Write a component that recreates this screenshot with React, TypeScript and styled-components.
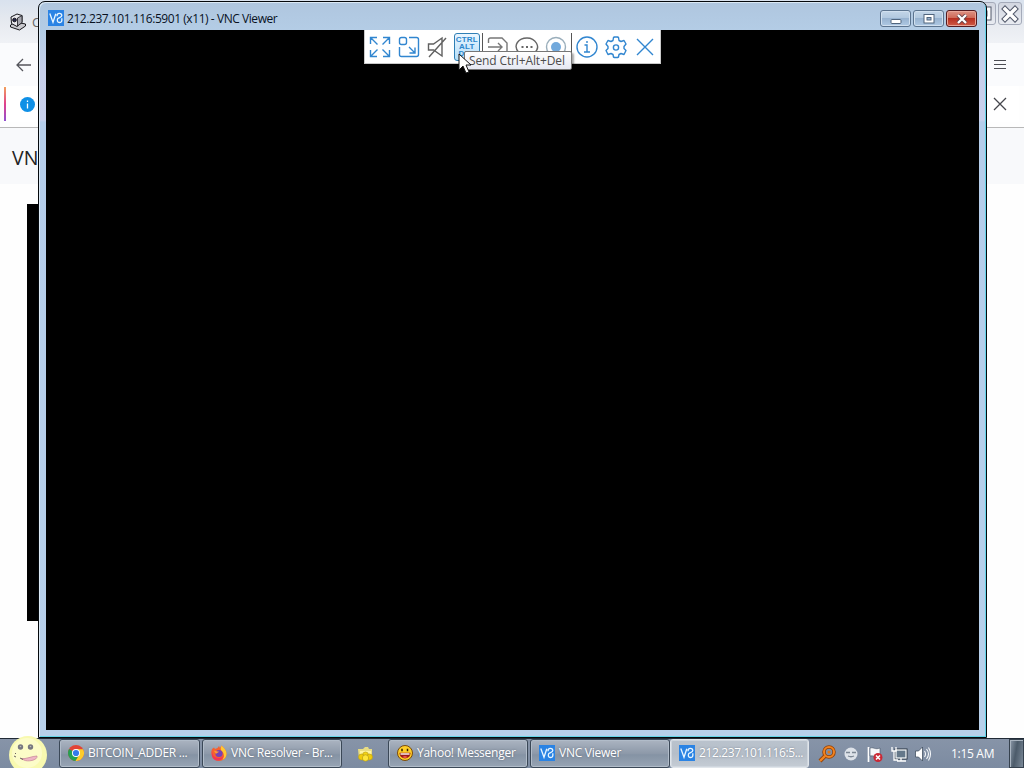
import React from 'react';
import styled, { createGlobalStyle } from 'styled-components';

const Global = createGlobalStyle`
  * { box-sizing: border-box; }
  body { margin: 0; overflow: hidden; background: #fff; font-family: "Open Sans", "Noto Sans", sans-serif; }
  svg { display: block; flex: none; }
`;

const Desktop = styled.div`
  position: relative;
  width: 1024px;
  height: 768px;
  overflow: hidden;
  display: flex;
  flex-direction: column;
`;

/* Browser in the background */
const Browser = styled.div`
  flex: 1;
  display: flex;
  flex-direction: column;
  background: #fefefe;
`;
const BrowserTabs = styled.div`
  height: 43px;
  display: flex;
  align-items: flex-start;
  justify-content: space-between;
  background: linear-gradient(#d9e2ee, #e5e9ef 45%, #f0f2f6);
`;
const TabLabel = styled.div`
  display: flex;
  align-items: center;
  gap: 5px;
  padding: 13px 0 0 9px;
  font-size: 13px;
  line-height: 18px;
  color: #666;
`;
const Captions = styled.div`
  display: flex;
  gap: 2px;
  padding: 2px 2px 0 0;
`;
const CaptionButton = styled.div`
  width: 24px;
  height: 23px;
  display: grid;
  place-items: center;
  border: 1px solid #a5abba;
  border-radius: 3px;
  background: linear-gradient(#d2d6e0, #e8ebf1);
`;
const BrowserBar = styled.div<{ $h: number; $left: number; $right: number }>`
  height: ${p => p.$h}px;
  display: flex;
  align-items: center;
  justify-content: space-between;
  padding: 0 ${p => p.$right}px 0 ${p => p.$left}px;
  background: #fafbfd;
`;
const Notice = styled.div`
  height: 36px;
  margin: 0 5px 0 4px;
  padding: 0 12px 0 15px;
  display: flex;
  align-items: center;
  justify-content: space-between;
  background: linear-gradient(#f2a05c, #e0408c 50%, #9050d0) left / 2px 34px no-repeat #fff;
`;
const Heading = styled.div`
  height: 57px;
  margin-top: 5px;
  border-top: 1px solid #b8b8b8;
  padding: 17px 0 0 12px;
  background: #f8f9fb;
  font-size: 19.5px;
  line-height: 26px;
  color: #222;
`;
const Preview = styled.div`
  width: 300px;
  height: 417px;
  margin: 20px 0 0 27px;
  background: #000;
`;

/* Viewer window */
const Window = styled.section`
  position: absolute;
  left: 38px;
  top: 1px;
  width: 949px;
  height: 737px;
  border: 1px solid #05090d;
  border-radius: 7px 7px 0 0;
  padding: 0 7px 7px 7px;
  display: flex;
  flex-direction: column;
  background: linear-gradient(#afc6df 0, #b4cde6 30px, #c7cfea 70px, #c8d0ec 118px, #b5cdea 120px, #b7d0ea 100%);
  box-shadow: inset 1px 1px 0 #dbe9f5, inset -1px -1px 0 #63d4e8;
`;
const TitleBar = styled.header`
  height: 28px;
  display: flex;
  align-items: flex-start;
  padding: 8px 2px 0 2px;
  gap: 3px;
`;
const Title = styled.div`
  flex: 1;
  font-size: 12px;
  line-height: 17px;
  letter-spacing: -0.44px;
  color: #08111f;
  white-space: nowrap;
`;
const WindowButtons = styled.div`
  display: flex;
  gap: 2px;
`;
const WindowButton = styled.div<{ $close?: boolean }>`
  width: 31px;
  height: 17px;
  display: grid;
  place-items: center;
  border: 1px solid ${p => (p.$close ? '#541b20' : '#5c748f')};
  border-radius: 3px;
  box-shadow: inset 0 0 0 1px ${p => (p.$close ? '#e9a597' : '#d1e0ef')};
  background: ${p => (p.$close
    ? 'linear-gradient(#dd9284, #cf6856 47%, #b72f20 50%, #cf5b47)'
    : 'linear-gradient(#c4d6e8, #b1c8df 47%, #98b3d0 50%, #afc9e4)')};
`;
const Screen = styled.main`
  flex: 1;
  background: #000;
  display: flex;
  justify-content: center;
  align-items: flex-start;
`;

/* Floating viewer toolbar */
const ToolBar = styled.div`
  position: relative;
  width: 297px;
  height: 34px;
  padding: 3px 1px 2px;
  display: flex;
  background: #fff;
  border: 1px solid #c9c9c9;
  border-top: 0;
`;
const ToolGroup = styled.div<{ $w: number; $divided?: boolean }>`
  width: ${p => p.$w}px;
  display: flex;
  justify-content: space-around;
  align-items: center;
  border-left: ${p => (p.$divided ? '1px solid #555' : '0')};
`;
const CadButton = styled.div`
  width: 26px;
  height: 28px;
  border: 1px solid #2f7fb5;
  border-radius: 3px;
  padding-top: 2px;
  background: linear-gradient(#eaf6ff, #b5def8);
  color: #2b86cc;
  font: 700 8px/7px "Liberation Sans", sans-serif;
  letter-spacing: 0.2px;
  text-align: center;
`;
const Tooltip = styled.div`
  position: absolute;
  left: 99px;
  top: 21px;
  width: 108px;
  height: 19px;
  border: 1px solid #767676;
  border-radius: 2px;
  padding-left: 4px;
  background: linear-gradient(#fff, #e6e8f2);
  box-shadow: 2px 2px 2px rgba(0, 0, 0, 0.35);
  color: #4c4c4c;
  font-size: 12px;
  line-height: 17px;
  letter-spacing: -0.13px;
  white-space: nowrap;
`;
const Pointer = styled.svg`
  position: absolute;
  left: 93px;
  top: 23px;
`;

/* Taskbar */
const TaskBar = styled.footer`
  height: 30px;
  display: flex;
  background: linear-gradient(#8794a8, #7c8ba1);
  border-top: 1px solid #202a36;
`;
const Start = styled.div`
  position: relative;
  z-index: 2;
  width: 59px;
  padding-left: 8px;
  margin-top: -3px;
`;
const Tasks = styled.div`
  display: flex;
  width: 751px;
`;
const Task = styled.div<{ $w: number; $gap?: number; $active?: boolean; $spacing?: number }>`
  width: ${p => p.$w}px;
  height: 29px;
  margin-right: ${p => p.$gap ?? 0}px;
  padding: 0 0 2px 8px;
  display: flex;
  align-items: center;
  gap: 4px;
  border: 1px solid ${p => (p.$active ? '#e0e5ea' : '#3b4857')};
  border-radius: 3px;
  box-shadow: inset 0 0 0 1px ${p => (p.$active ? '#cfd6de' : '#b1bcc9')};
  background: ${p => (p.$active
    ? 'linear-gradient(#bac3cd, #b5bec9 50%, #c5ccd4)'
    : 'linear-gradient(#abb4c1, #8d99a9 50%, #8593a4 55%, #97a4b4)')};
  color: #fff;
  font-size: 12px;
  letter-spacing: ${p => p.$spacing ?? -0.26}px;
  white-space: nowrap;
  text-shadow: 0 0 2px rgba(50, 60, 75, 0.5);
`;
const QuickItem = styled.div`
  width: 46px;
  display: grid;
  place-items: center;
`;
const Tray = styled.div`
  display: flex;
  align-items: center;
  gap: 6px;
  padding-left: 8px;
  width: 132px;
`;
const Clock = styled.div`
  width: 67px;
  padding: 6px 0 0 9px;
  font-size: 12px;
  line-height: 18px;
  letter-spacing: -0.3px;
  color: #fff;
  white-space: nowrap;
`;
const ShowDesktop = styled.div`
  width: 15px;
  border: 1px solid #35414e;
  box-shadow: inset 1px 1px 0 #a9b4c0;
  background: linear-gradient(100deg, #8d9aaa, #4c5b6a 45%, #7b8998);
`;

const VncLogo = () => (
  <svg width="16" height="16" viewBox="0 0 16 16" fill="none">
    <rect width="16" height="16" fill="#2a83e4" />
    <path d="M1.800 3.500 5 12.300 7.800 3.800M9 6.200C8.800 2.600 13.800 2.600 13.800 5.500 13.800 7.600 10.500 7.400 9.700 8.700 8.900 10.200 9.300 12.500 11.500 12.500 14 12.500 14 10.500 13.800 8.200" stroke="#e9f6ff" strokeWidth="1.300" />
  </svg>
);

const Stroke = ({ size = 24, color = '#3186d0', children }: { size?: number; color?: string; children: React.ReactNode }) => (
  <svg width={size} height={size} viewBox="0 0 24 24" fill="none" stroke={color} strokeWidth="1.4">{children}</svg>
);

const Cross = ({ size, color }: { size: number; color: string }) => (
  <svg width={size} height={size} viewBox="0 0 14 14" stroke={color} strokeWidth="1.3"><path d="m1 1 12 12M13 1 1 13" /></svg>
);

const Chrome = () => (
  <svg width="16" height="16" viewBox="0 0 16 16">
    <circle cx="8" cy="8" r="8" fill="#e24335" />
    <path d="M8 8 1.1 4A8 8 0 0 0 7.500 16L11.500 10Z" fill="#25a052" />
    <path d="M8 4.200h7A8 8 0 0 1 7.500 16L11.300 9.800Z" fill="#fccc2b" />
    <circle cx="8" cy="8" r="4" fill="#fff" /><circle cx="8" cy="8" r="3.100" fill="#347bea" />
  </svg>
);

const Firefox = () => (
  <svg width="16" height="16" viewBox="0 0 16 16">
    <path d="M1 4 3 2.500 4 4 6.500 3 8 1l1 2 1.500-2.500C13 3 15.500 5 15.500 9A7.500 7 0 0 1 .5 9C.3 7 .5 5.500 1 4Z" fill="#f6602f" />
    <path d="M10.500.5C13 3 15.500 5 15.500 9c0 3-2 5-4 6 2-3 2-7-1-9-1-1.500-1-3 0-5.500Z" fill="#ffc832" />
    <path d="M1 5c0 5 2 8 7 8 2 0 4-1 5-3-1 4-4 6-7 5.500C2 15 0 11 1 5Z" fill="#f23557" />
    <circle cx="8" cy="8.500" r="3.600" fill="#7841b4" /><path d="M3 6c2-1 3 1 5 .5C7 8 5 8 5 9Z" fill="#ff9b2f" />
  </svg>
);

const Smiley = () => (
  <svg width="16" height="16" viewBox="0 0 16 16">
    <circle cx="8" cy="8" r="7.500" fill="#ffcf28" stroke="#7b4a0a" />
    <path d="M5 3.800v2.400M10.500 3.800v2.400" fill="none" stroke="#3a2200" strokeWidth="1.500" />
    <path d="M2.500 7.800h11c0 7.500-11 7.500-11 0Z" fill="#9c1b16" /><path d="M3.500 8.300h9v1.400h-9Z" fill="#fff" /><path d="M5.500 12q2.500-2 5 0-2.500 2-5 0Z" fill="#f0554a" />
  </svg>
);

const StartFace = () => (
  <svg width="40" height="34" viewBox="0 0 40 34">
    <circle cx="20" cy="19" r="19" fill="#f8f9b0" /><circle cx="19" cy="17" r="15" fill="#fcfcc8" />
    <circle cx="12.500" cy="11" r="2.700" fill="#77777f" /><circle cx="22.500" cy="11" r="2.700" fill="#77777f" />
    <circle cx="12.500" cy="10.500" r=".8" fill="#bbb" /><circle cx="22.500" cy="10.500" r=".8" fill="#bbb" />
    <path d="M13 22.500c5 1 11-2.500 16-2.500 1 4.500-10 6-13 4Z" fill="#efb5c5" stroke="#c98b9c" strokeWidth=".8" />
    <path d="m12 22 3 1.500M7 17l1 1M6 20l2 1" stroke="#6b635f" />
  </svg>
);

export default function App() {
  return (
    <>
      <Global />
      <Desktop>
        <Browser>
          <BrowserTabs>
            <TabLabel>
              <svg width="18" height="18" viewBox="0 0 18 18" stroke="#17171c" strokeLinejoin="round">
                <path d="m1.500 12 5-3 10 2v2l-6 4-9-3Z" fill="#c9c9ce" /><path d="m2 4 6-3 5 1.500v7l-5 4-5.500-3Z" fill="#e8e8ec" />
                <path d="m8.500 5 4.500-2.500v7l-4.500 3.500Z" fill="#a7a7af" strokeWidth=".8" /><circle cx="5.500" cy="7" r="1.800" fill="#26264c" />
              </svg>
              C
            </TabLabel>
            <Captions>
              <CaptionButton><svg width="16" height="16" fill="none"><rect x="4" y="3" width="9" height="9" stroke="#4f5668" strokeWidth="5" /><rect x="4" y="3" width="9" height="9" stroke="#fff" strokeWidth="3" /></svg></CaptionButton>
              <CaptionButton><svg width="18" height="18" viewBox="0 0 18 18" strokeLinecap="square"><path d="m4 4 10 10M14 4 4 14" stroke="#4f5668" strokeWidth="5.500" /><path d="m4 4 10 10M14 4 4 14" stroke="#fff" strokeWidth="3.500" /></svg></CaptionButton>
            </Captions>
          </BrowserTabs>
          <BrowserBar $h={43} $left={16} $right={18}>
            <svg width="15" height="14" viewBox="0 0 15 14" fill="none" stroke="#55565c" strokeWidth="1.300"><path d="M15 7H1.500M7 1 1 7l6 6" /></svg>
            <svg width="12" height="12" stroke="#4c4d53" strokeWidth="1.200"><path d="M0 1.500h12M0 5.500h12M0 9.500h12" /></svg>
          </BrowserBar>
          <Notice>
            <svg width="17" height="17" viewBox="0 0 17 17"><circle cx="8.500" cy="8.500" r="7.500" fill="#0f90e6" /><path d="M8.500 7.500v5M8.500 4.500V6" stroke="#fff" strokeWidth="1.300" /></svg>
            <Cross size={14} color="#45464c" />
          </Notice>
          <Heading>VNC</Heading>
          <Preview />
        </Browser>

        <TaskBar>
          <Start><StartFace /></Start>
          <Tasks>
            <Task $w={141} $gap={2}><Chrome />BITCOIN_ADDER ...</Task>
            <Task $w={140}><Firefox />VNC Resolver - Br...</Task>
            <QuickItem>
              <svg width="17" height="16" viewBox="0 0 17 16"><path d="M1 3h5l2-2h3l1 2h3v10H2Z" fill="#e8dc83" /><path d="M3 5h11v8H3Z" fill="#fff4a0" /><circle cx="8.500" cy="9" r="3" fill="#f5d415" stroke="#b39a18" strokeWidth=".6" /><circle cx="4.500" cy="11" r="3" fill="#f1cc0b" stroke="#b39a18" strokeWidth=".6" /><circle cx="12.500" cy="11" r="3" fill="#f1cc0b" stroke="#b39a18" strokeWidth=".6" /><circle cx="8.500" cy="12" r="3.200" fill="#ffe639" stroke="#a98f14" strokeWidth=".6" /></svg>
            </QuickItem>
            <Task $w={140} $gap={2}><Smiley />Yahoo! Messenger</Task>
            <Task $w={140}><VncLogo />VNC Viewer</Task>
            <Task $w={139} $active $spacing={-0.36}><VncLogo />212.237.101.116:5...</Task>
          </Tasks>
          <Tray>
            <svg width="18" height="18" viewBox="0 0 18 18" fill="none"><path d="m7 11-5 5" stroke="#913f05" strokeWidth="4" /><circle cx="11" cy="7" r="5" stroke="#913f05" strokeWidth="3.500" /><path d="m7 11-5 5" stroke="#f28420" strokeWidth="2.400" /><circle cx="11" cy="7" r="5" stroke="#f28420" strokeWidth="2" /><circle cx="11" cy="7" r="1.500" fill="#e67612" /></svg>
            <svg width="18" height="18" viewBox="0 0 18 18" fill="none"><circle cx="9" cy="9" r="6.500" fill="#dde2e9" /><path d="M4 7.500h4M10 7.500h4M6 11q3 1.500 6 0" stroke="#7c8794" strokeWidth="1.300" /></svg>
            <svg width="18" height="18" viewBox="0 0 18 18" fill="none"><path d="M2.500 2v15" stroke="#fff" strokeWidth="1.700" /><path d="M4 3c4-1 5 2 10 0v8c-4 2-6-1-10 0Z" fill="#f6f8fa" stroke="#455365" strokeWidth=".6" /><circle cx="12" cy="12.500" r="4.500" fill="#cb2835" /><path d="m10 10.500 4 4M14 10.500l-4 4" stroke="#fff" strokeWidth="1.500" /></svg>
            <svg width="18" height="18" viewBox="0 0 18 18" fill="none"><rect x="6" y="5" width="10" height="8" fill="#65788a" stroke="#273341" strokeWidth="3" /><rect x="6" y="5" width="10" height="8" fill="#65788a" stroke="#f2f4f6" strokeWidth="1.300" /><path d="M7 16h9M11 13v3M2 2v4h4V2M4 6v9h4" stroke="#fff" strokeWidth="1.300" /></svg>
            <svg width="18" height="18" viewBox="0 0 18 18" fill="none"><path d="M1.500 6h3l4-4v14l-4-4h-3Z" fill="#fff" stroke="#344355" strokeWidth=".7" /><path d="M10.500 6q2 3 0 6M12.500 4q4 5 0 10M14.500 2.500q4 6.500 0 13" stroke="#f5f8fa" strokeWidth="1.100" /></svg>
          </Tray>
          <Clock>1:15 AM</Clock>
          <ShowDesktop />
        </TaskBar>

        <Window>
          <TitleBar>
            <VncLogo />
            <Title>212.237.101.116:5901 (x11) - VNC Viewer</Title>
            <WindowButtons>
              <WindowButton><svg width="12" height="12"><rect x="1" y="6.500" width="10" height="4" rx="1" fill="#fff" stroke="#50657d" /></svg></WindowButton>
              <WindowButton><svg width="12" height="10" fill="none"><rect x="2.500" y="2" width="7" height="5.500" stroke="#50657d" strokeWidth="4" /><rect x="2.500" y="2" width="7" height="5.500" stroke="#fff" strokeWidth="2" /></svg></WindowButton>
              <WindowButton $close><svg width="12" height="10"><path d="m2 1 8 8M10 1 2 9" stroke="#654047" strokeWidth="4" /><path d="m2 1 8 8M10 1 2 9" stroke="#fff" strokeWidth="2.300" /></svg></WindowButton>
            </WindowButtons>
          </TitleBar>
          <Screen>
            <ToolBar>
              <ToolGroup $w={116}>
                <Stroke><path d="M2.500 9V2.500H9M15 2.500h6.500V9M21.500 15v6.500H15M9 21.500H2.500V15M3 3l6.500 6.500M21 3l-6.500 6.500M21 21l-6.500-6.500M3 21l6.500-6.500" /></Stroke>
                <Stroke><path d="M12 2.500h7.500q2 0 2 2v15q0 2-2 2h-15q-2 0-2-2V12M12 12l6 6M18 12.500V18h-5.500" /><rect x="2.500" y="2.500" width="7" height="7" rx="2" /></Stroke>
                <Stroke color="#606060"><path d="M3.500 9h5L17 3v18l-8.500-6h-5ZM21 3 4 22" /></Stroke>
                <CadButton>CTRL<br />ALT<br />DEL</CadButton>
              </ToolGroup>
              <ToolGroup $w={89} $divided>
                <Stroke color="#777"><path d="M2.500 8V5q0-2 2-2H16l5 5v11q0 2-2 2H4.500q-2 0-2-2v-3M2 12h14M12 8l4 4-4 4" /></Stroke>
                <Stroke color="#666"><path d="M4 18c-7-8 0-15 8-15s15 9 7 15-12 2-14 3Z" /><path d="M6.500 12h2M11 12h2M15.500 12h2" strokeWidth="2" /></Stroke>
                <Stroke color="#9aaebb"><circle cx="12" cy="12" r="9.500" /><circle cx="12" cy="12" r="5" fill="#72a9dc" stroke="none" /></Stroke>
              </ToolGroup>
              <ToolGroup $w={88} $divided>
                <Stroke><circle cx="12" cy="12" r="10" /><path d="M9.500 10H12v7M9 17h6M12 6v2" /></Stroke>
                <Stroke><path d="m9.500 2.500 1-.5h3l1 .5.5 3 2 1 3-1 2 3.500-2 2.500v2l2 2-2 4-3-1-2 1-.5 2.500-1 .5h-3l-1-.5-.5-2.500-2-1-3 1-2-4 2-2v-2L2 9l2-3.500 3 1 2-1Z" strokeLinejoin="round" /><circle cx="12" cy="12.500" r="2.600" /></Stroke>
                <Stroke><path d="m4 4 16 16M20 4 4 20" /></Stroke>
              </ToolGroup>
              <Tooltip>Send Ctrl+Alt+Del</Tooltip>
              <Pointer width="14" height="21" viewBox="0 0 14 21"><path d="M1 1v16l4-4 3 7 3-1-3-7h5Z" fill="#fff" stroke="#151515" /></Pointer>
            </ToolBar>
          </Screen>
        </Window>
      </Desktop>
    </>
  );
}
